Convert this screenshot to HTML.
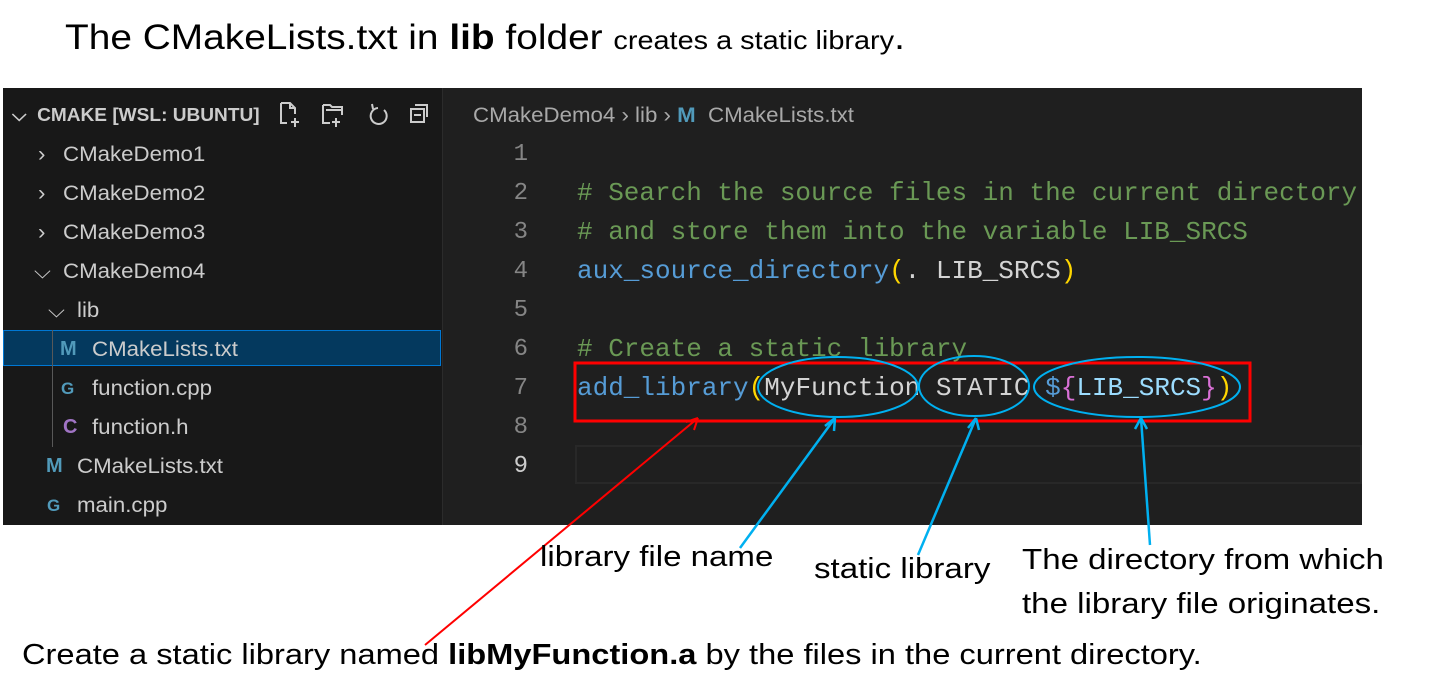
<!DOCTYPE html>
<html><head><meta charset="utf-8"><style>
body{margin:0;width:1443px;height:699px;background:#fff;position:relative;overflow:hidden;font-family:"Liberation Sans",sans-serif}
.a{position:absolute;white-space:nowrap}
.w{transform:scaleX(1.14);transform-origin:0 0}
#panel{position:absolute;left:3px;top:88px;width:1359px;height:437px;background:#1f1f1f}
#side{position:absolute;left:3px;top:88px;width:439px;height:437px;background:#181818;border-right:1px solid #2b2b2b}
.s{position:absolute;color:#cccccc;font-size:21px;line-height:39px;white-space:nowrap;transform:scaleX(1.06);transform-origin:0 0}
.ic{position:absolute;font-size:20px;line-height:39px;font-weight:bold}
.code{position:absolute;font-family:"Liberation Mono","DejaVu Sans Mono",monospace;font-size:26px;line-height:39px;white-space:pre}
.ln{position:absolute;left:470px;width:58px;text-align:right;color:#858585;font-family:"Liberation Mono",monospace;font-size:24px;line-height:39px}
.cm{color:#6a9955}.fn{color:#569cd6}.tx{color:#d4d4d4}.y{color:#ffd700}.p{color:#da70d6}.v{color:#9cdcfe}
</style></head><body>
<div class="a" style="left:65px;top:18px;font-size:35px;color:#000;transform:scaleX(1.11);transform-origin:0 0">The CMakeLists.txt in <b>lib</b> folder <span style="font-size:26px">creates a static library</span>.</div>
<div id="panel"></div><div id="side"></div>
<div style="position:absolute;left:3px;top:330px;width:438px;height:36px;background:#04395e;border:1px solid #0078d4;box-sizing:border-box"></div>
<div style="position:absolute;left:52px;top:330px;width:1px;height:117px;background:#585858"></div>
<div style="position:absolute;left:575px;top:445px;width:787px;height:39px;border:2px solid #282828;box-sizing:border-box"></div>
<div class="s" style="left:12px;top:96px;font-size:18px;font-weight:bold">⌵&nbsp; CMAKE [WSL: UBUNTU]</div>
<svg class="a" style="left:278px;top:100px" width="160" height="30" fill="none" stroke="#ccc" stroke-width="2">
<path d="M3 3h9l5 5v6M3 3v20h6M12 3v5h5M17 18v9M13 22h8"/>
<path d="M45 5h7l2 2h10v8M45 5v18h7M48 10h16M58 18v9M54 22h8"/>
<path d="M100 8a8 8 0 1 0 6 2M94 4l1 5"/>
<path d="M133 9h13v13h-13zM137 5h12v12M136 15h7"/>
</svg>
<div class="s" style="left:38px;top:135px">›</div><div class="s" style="left:63px;top:135px">CMakeDemo1</div>
<div class="s" style="left:38px;top:174px">›</div><div class="s" style="left:63px;top:174px">CMakeDemo2</div>
<div class="s" style="left:38px;top:213px">›</div><div class="s" style="left:63px;top:213px">CMakeDemo3</div>
<div class="s" style="left:34px;top:252px">⌵</div><div class="s" style="left:63px;top:252px">CMakeDemo4</div>
<div class="s" style="left:48px;top:291px">⌵</div><div class="s" style="left:77px;top:291px">lib</div>
<div class="ic" style="left:60px;top:330px;color:#519aba">M</div><div class="s" style="left:92px;top:330px">CMakeLists.txt</div>
<div class="ic" style="left:61px;top:369px;color:#519aba;font-size:17px">G</div><div class="s" style="left:92px;top:369px">function.cpp</div>
<div class="ic" style="left:63px;top:408px;color:#a074c4">C</div><div class="s" style="left:92px;top:408px">function.h</div>
<div class="ic" style="left:46px;top:447px;color:#519aba">M</div><div class="s" style="left:77px;top:447px">CMakeLists.txt</div>
<div class="ic" style="left:47px;top:486px;color:#519aba;font-size:17px">G</div><div class="s" style="left:77px;top:486px">main.cpp</div>
<div class="s" style="left:473px;top:96px;color:#a9a9a9">CMakeDemo4 › lib › <b style="color:#519aba">M</b>&nbsp; CMakeLists.txt</div>
<div class="ln" style="top:135px">1</div><div class="ln" style="top:174px">2</div><div class="ln" style="top:213px">3</div><div class="ln" style="top:252px">4</div><div class="ln" style="top:291px">5</div><div class="ln" style="top:330px">6</div><div class="ln" style="top:369px">7</div><div class="ln" style="top:408px">8</div><div class="ln" style="top:447px;color:#ccc">9</div>
<div class="code" style="left:577px;top:174px"><span class="cm"># Search the source files in the current directory</span>
<span class="cm"># and store them into the variable LIB_SRCS</span>
<span class="fn">aux_source_directory</span><span class="y">(</span><span class="tx">. LIB_SRCS</span><span class="y">)</span>

<span class="cm"># Create a static library</span>
<span class="fn">add_library</span><span class="y">(</span><span class="tx">MyFunction STATIC </span><span class="fn">$</span><span class="p">{</span><span class="v">LIB_SRCS</span><span class="p">}</span><span class="y">)</span></div>
<svg class="a" style="left:0;top:0" width="1443" height="699" fill="none">
<rect x="575" y="363" width="675" height="58" stroke="#f00" stroke-width="3"/>
<ellipse cx="838" cy="387" rx="80" ry="30" stroke="#00b0f0" stroke-width="2"/>
<ellipse cx="974" cy="386" rx="55" ry="30" stroke="#00b0f0" stroke-width="2"/>
<ellipse cx="1137" cy="387" rx="103" ry="30" stroke="#00b0f0" stroke-width="2"/>
<g stroke="#f00" stroke-width="2"><path d="M425 645L698 418"/><path d="M698 418l-12 4M698 418l-4 12"/></g>
<g stroke="#00b0f0" stroke-width="2.5"><path d="M740 548L835 418M918 555L976 418M1150 545L1141 418"/>
<path d="M835 418l-10 8M835 418l-1 13M976 418l-8 10M976 418l3 12M1141 418l-6 11M1141 418l6 11"/></g>
</svg>
<div class="a w" style="left:540px;top:541px;font-size:29px">library file name</div>
<div class="a w" style="left:814px;top:553px;font-size:29px">static library</div>
<div class="a w" style="left:1022px;top:538px;font-size:29px;line-height:44px">The directory from which<br>the library file originates.</div>
<div class="a" style="left:22px;top:639px;font-size:29px;transform:scaleX(1.125);transform-origin:0 0">Create a static library named <b>libMyFunction.a</b> by the files in the current directory.</div>
</body></html>
